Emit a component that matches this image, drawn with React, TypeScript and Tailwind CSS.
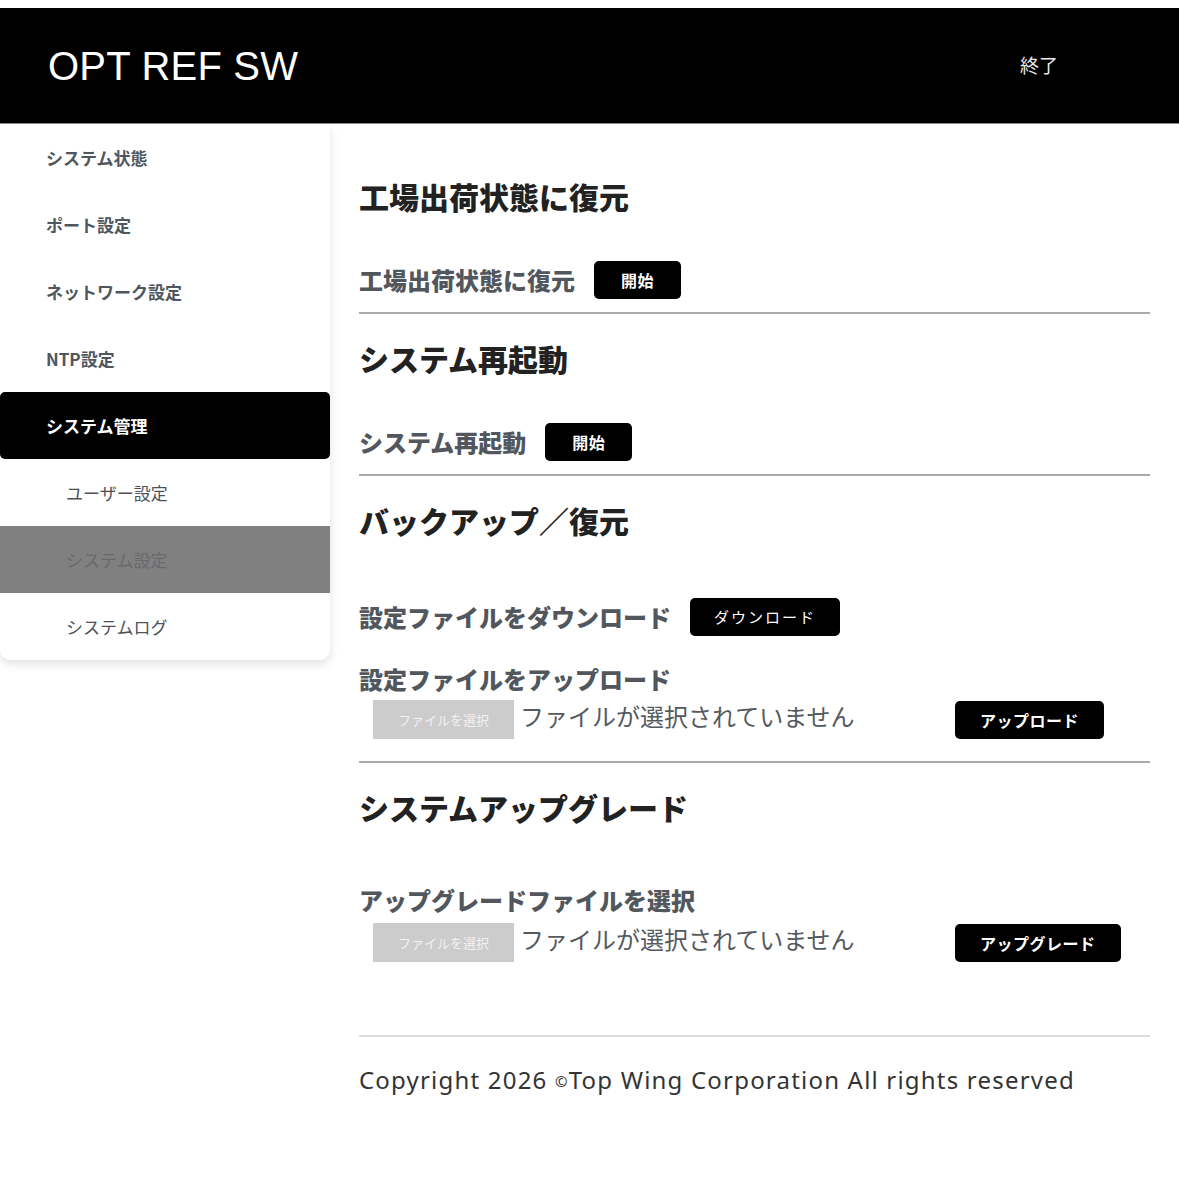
import type { ReactNode } from "react"

const jp = { fontFamily: '"Noto Sans CJK JP", "Noto Sans", sans-serif' }
const latin = { fontFamily: '"Liberation Sans", "Noto Sans CJK JP", sans-serif' }
const footerFont = { fontFamily: '"Noto Sans", "Noto Sans CJK JP", sans-serif' }

const menu = [
  { label: "システム状態" },
  { label: "ポート設定" },
  { label: "ネットワーク設定" },
  { label: "NTP設定" },
  { label: "システム管理", active: true },
  { label: "ユーザー設定", sub: true },
  { label: "システム設定", sub: true, current: true },
  { label: "システムログ", sub: true },
]

function Sidebar() {
  return (
    <aside className="w-[330px] shrink-0 self-start bg-white rounded-b-[10px] shadow-[0_4px_10px_rgba(0,0,0,0.12)]">
      {menu.map((item) => {
        let cls = "h-[67px] flex items-center text-[17px] "
        if (item.active) cls += "bg-black text-white font-bold pl-[46px] rounded-[5px]"
        else if (item.current) cls += "bg-[#808080] text-[#666a6f] pl-[66px]"
        else if (item.sub) cls += "text-[#4d5258] pl-[66px]"
        else cls += "text-[#50565d] font-bold pl-[46px]"
        return (
          <div key={item.label} className={cls}>
            {item.label}
          </div>
        )
      })}
    </aside>
  )
}

function Btn({ children, thin, wide }: { children: ReactNode; thin?: boolean; wide?: boolean }) {
  if (thin) {
    return (
      <button className="h-[38px] px-[24px] bg-black text-white rounded-[5px] text-[15px] tracking-[2px]">
        {children}
      </button>
    )
  }
  return (
    <button
      className={
        "h-[38px] bg-black text-white rounded-[5px] text-[16px] font-bold tracking-[0.5px] " +
        (wide ? "px-[27px]" : "px-[25px]")
      }
    >
      {children}
    </button>
  )
}

function Heading({ children }: { children: ReactNode }) {
  return <h2 className="text-[30px] leading-[45px] font-black text-[#222]">{children}</h2>
}

function Label({ children }: { children: ReactNode }) {
  return <span className="text-[24px] leading-[36px] font-black text-[#51575d]">{children}</span>
}

function FileRow({ button }: { button: string }) {
  return (
    <div className="flex items-center">
      <div className="w-[596px] pl-[14px] flex items-center gap-[6px]">
        <div className="w-[141px] h-[39px] bg-[#cccccc] flex items-center justify-center text-[13px] text-[#f2f2f2]">
          ファイルを選択
        </div>
        <span className="text-[24px] leading-[36px] text-[#555a60] -mt-[8px]">ファイルが選択されていません</span>
      </div>
      <Btn>{button}</Btn>
    </div>
  )
}

export default function App() {
  return (
    <div className="min-h-[1179px] bg-white pt-2" style={jp}>
      <header className="h-[116px] bg-black border-b border-[#8a8a8a] flex items-center justify-between pl-[48px] pr-[121px]">
        <span className="text-[40px] text-white tracking-[0.2px]" style={latin}>
          OPT REF SW
        </span>
        <span className="text-[19px] text-[#e8e8e8]">終了</span>
      </header>

      <div className="flex">
        <Sidebar />

        <main className="flex-1 pl-[29px] pr-[29px] pt-[50px]">
          <Heading>工場出荷状態に復元</Heading>
          <div className="flex items-center gap-[19px] mt-[42px]">
            <Label>工場出荷状態に復元</Label>
            <Btn wide>開始</Btn>
          </div>
          <div className="h-[2px] bg-[#aaaaaa] mt-[13px]" />

          <div className="mt-[22px]">
            <Heading>システム再起動</Heading>
          </div>
          <div className="flex items-center gap-[19px] mt-[42px]">
            <Label>システム再起動</Label>
            <Btn wide>開始</Btn>
          </div>
          <div className="h-[2px] bg-[#aaaaaa] mt-[13px]" />

          <div className="mt-[22px]">
            <Heading>バックアップ／復元</Heading>
          </div>
          <div className="flex items-center gap-[19px] mt-[55px]">
            <Label>設定ファイルをダウンロード</Label>
            <Btn thin>ダウンロード</Btn>
          </div>
          <div className="mt-[25px]">
            <Label>設定ファイルをアップロード</Label>
          </div>
          <div className="mt-[3px]">
            <FileRow button="アップロード" />
          </div>
          <div className="h-[2px] bg-[#aaaaaa] mt-[22px]" />

          <div className="mt-[22px]">
            <Heading>システムアップグレード</Heading>
          </div>
          <div className="mt-[52px]">
            <Label>アップグレードファイルを選択</Label>
          </div>
          <div className="mt-[5px]">
            <FileRow button="アップグレード" />
          </div>
          <div className="h-[2px] bg-[#dddddd] mt-[73px]" />

          <p className="mt-[28px] text-[24px] leading-[30px] tracking-[1.2px] text-[#333]" style={footerFont}>
            Copyright 2026 <span className="text-[15px] align-[2px]">©</span>Top Wing Corporation All rights reserved
          </p>
        </main>
      </div>
    </div>
  )
}
